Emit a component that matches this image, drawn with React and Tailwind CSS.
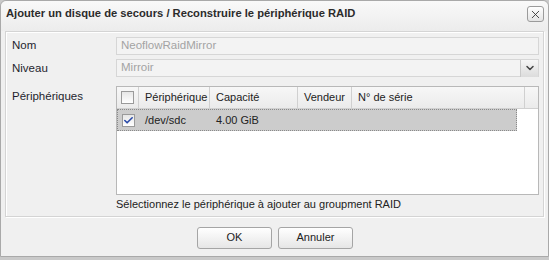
import { X, ChevronDown, Check } from "lucide-react";

const font = { fontFamily: '"Liberation Sans", Arial, sans-serif' };

function Box({ checked }) {
    return (
        <span className="flex h-[13px] w-[13px] items-center justify-center border border-[#9a9a9a] bg-gradient-to-b from-[#e6e6e6] to-white">
            {checked && <Check size={11} strokeWidth={3.5} className="text-[#2a4aa8]" />}
        </span>
    );
}

export default function App() {
    const cols = [
        { label: "Périphérique", w: "w-[71px]" },
        { label: "Capacité", w: "w-[88px]" },
        { label: "Vendeur", w: "w-[54px]" },
        { label: "N° de série", w: "w-[173px]" },
    ];

    return (
        <div className="h-[260px] w-[549px] bg-[#c9c9c9] text-[11.5px] text-[#1f1f2e]" style={font}>
            <div className="flex h-[257px] flex-col rounded-t-[6px] border border-[#a9a9a9] bg-[#f0f0f0]">
                {/* Title bar */}
                <div className="flex h-[30px] shrink-0 items-start justify-between rounded-t-[6px] bg-gradient-to-b from-[#f9f9f9] to-[#ececec] pl-[5px] pr-[4px] pt-[5px]">
                    <span className="text-[11.2px] font-bold leading-[14px] text-[#2b2b2b]">
                        Ajouter un disque de secours / Reconstruire le périphérique RAID
                    </span>
                    <button className="flex h-[16px] w-[17px] items-center justify-center rounded-[3px] border border-[#9b9b9b] bg-gradient-to-b from-white to-[#e4e4e4]">
                        <X size={13} strokeWidth={1.6} className="text-[#333]" />
                    </button>
                </div>

                {/* Content panel */}
                <div className="mx-[4px] flex h-[186px] shrink-0 flex-col border border-[#d4d4d4] bg-[#f0f0f0] pl-[6px] pr-[4px] pt-[5px] shadow-[inset_1px_1px_0_#ffffff,1px_1px_0_#ffffff]">
                    <div className="flex h-[18px] items-center">
                        <label className="w-[104px]">Nom</label>
                        <div className="flex h-[18px] flex-1 items-center border border-[#d6d6d6] bg-[#f3f3f3] px-[4px] text-[#a3a3a3]">
                            NeoflowRaidMirror
                        </div>
                    </div>

                    <div className="mt-[4px] flex h-[18px] items-center">
                        <label className="w-[104px] pt-[2px]">Niveau</label>
                        <div className="flex h-[18px] flex-1 items-center border border-[#d6d6d6] bg-[#f3f3f3] pl-[4px] text-[#a3a3a3]">
                            <span className="flex-1">Mirroir</span>
                            <span className="flex h-[17px] w-[18px] items-center justify-center border-l border-[#c9c9c9] bg-gradient-to-b from-[#f6f6f6] to-[#dcdcdc]">
                                <ChevronDown size={12} strokeWidth={3} className="text-[#444]" />
                            </span>
                        </div>
                    </div>

                    <div className="mt-[9px] flex">
                        <label className="w-[104px] pt-[2px]">Périphériques</label>
                        <div className="flex-1">
                            <div className="h-[109px] border border-[#b8b8b8] bg-white text-[11px] text-[#222]">
                                <div className="flex h-[22px] border-b border-[#d0d0d0] bg-gradient-to-b from-[#f7f7f7] to-[#ebebeb]">
                                    <div className="flex w-[22px] items-center justify-center border-r border-[#d0d0d0]">
                                        <Box />
                                    </div>
                                    {cols.map((c) => (
                                        <div key={c.label} className={`${c.w} flex items-center border-r border-[#d0d0d0] pl-[6px]`}>
                                            {c.label}
                                        </div>
                                    ))}
                                    <div className="flex-1" />
                                </div>
                                <div className="flex h-[22px] w-[400px] border border-dotted border-[#8a8a8a] bg-[#cccccc]">
                                    <div className="flex w-[21px] items-center justify-center">
                                        <Box checked />
                                    </div>
                                    <div className="flex w-[71px] items-center pl-[6px]">/dev/sdc</div>
                                    <div className="flex w-[88px] items-center pl-[6px]">4.00 GiB</div>
                                </div>
                            </div>
                            <div className="mt-[2px] text-[11px] leading-[14px] text-[#222]">
                                Sélectionnez le périphérique à ajouter au groupment RAID
                            </div>
                        </div>
                    </div>
                </div>

                {/* Buttons */}
                <div className="flex flex-1 items-center justify-center gap-[6px] pl-[1px] pt-[2px]">
                    <button className="h-[22px] w-[75px] rounded-[3px] border border-[#a5a5a5] bg-gradient-to-b from-white to-[#e6e6e6] text-[11px] text-[#222]">
                        OK
                    </button>
                    <button className="h-[22px] w-[75px] rounded-[3px] border border-[#a5a5a5] bg-gradient-to-b from-white to-[#e6e6e6] text-[11px] text-[#222]">
                        Annuler
                    </button>
                </div>
            </div>
        </div>
    );
}
